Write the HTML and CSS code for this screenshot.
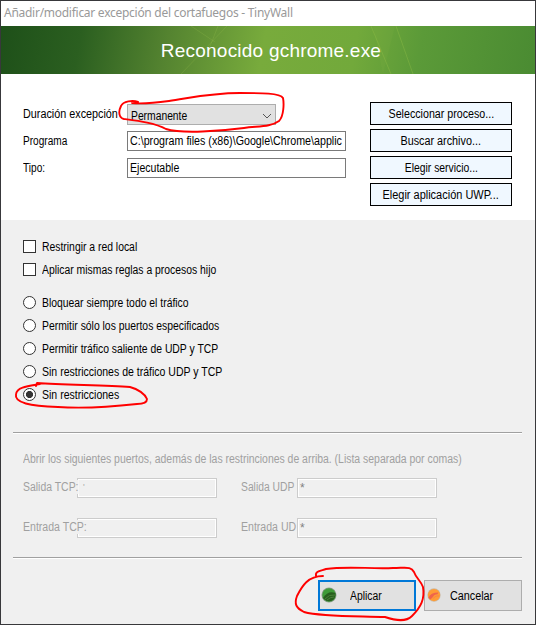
FILE: index.html
```html
<!DOCTYPE html>
<html lang="es">
<head>
<meta charset="utf-8">
<title>Añadir/modificar excepción del cortafuegos - TinyWall</title>
<link rel="stylesheet" href="styles.css">
</head>
<body>
<main class="window">
  <header class="titlebar"><span>Añadir/modificar excepción del cortafuegos - TinyWall</span></header>
  <div class="banner">
    <svg class="rays" viewBox="0 0 534 48" preserveAspectRatio="none">
      <path d="M180 48 226 0M217 0 208 23M190 0 214 16" stroke="#a5c757" stroke-opacity=".2" fill="none"/>
      <path d="M372 0H394L382 48Z" fill="#8fb84a" fill-opacity=".12"/>
      <path d="M370 0 390 48M395 0 412 48" stroke="#99c24b" stroke-opacity=".35" fill="none"/>
    </svg>
    <h1>Reconocido gchrome.exe</h1>
  </div>
  <section class="target">
    <div class="fields">
      <div class="field"><label><span class="t-dur">Duración excepción</span></label><div class="select"><span class="t-perm">Permanente</span><svg width="10" height="6" viewBox="0 0 10 6"><path d="M1 1 5 5 9 1" fill="none" stroke="#555"/></svg></div></div>
      <div class="field"><label><span class="t-prog">Programa</span></label><div class="input"><span class="t-path">C:\program files (x86)\Google\Chrome\applic</span></div></div>
      <div class="field"><label><span class="t-tipo">Tipo:</span></label><div class="input"><span class="t-ejec">Ejecutable</span></div></div>
    </div>
    <div class="pickers">
      <button><span class="t-selp">Seleccionar proceso...</span></button>
      <button><span class="t-busc">Buscar archivo...</span></button>
      <button><span class="t-serv">Elegir servicio...</span></button>
      <button><span class="t-uwp">Elegir aplicación UWP...</span></button>
    </div>
  </section>
  <section class="rules">
    <div class="option"><i class="check"></i><span class="t-red">Restringir a red local</span></div>
    <div class="option"><i class="check"></i><span class="t-hijo">Aplicar mismas reglas a procesos hijo</span></div>
    <div class="radios">
      <div class="option"><i class="radio"></i><span class="t-bloq">Bloquear siempre todo el tráfico</span></div>
      <div class="option"><i class="radio"></i><span class="t-puer">Permitir sólo los puertos especificados</span></div>
      <div class="option"><i class="radio"></i><span class="t-sal">Permitir tráfico saliente de UDP y TCP</span></div>
      <div class="option"><i class="radio"></i><span class="t-traf">Sin restricciones de tráfico UDP y TCP</span></div>
      <div class="option"><i class="radio on"></i><span class="t-sin">Sin restricciones</span></div>
    </div>
  </section>
  <section class="ports">
    <p><span class="t-abrir">Abrir los siguientes puertos, además de las restrinciones de arriba. (Lista separada por comas)</span></p>
    <div class="grid">
      <div class="port out"><label><span class="t-stcp">Salida TCP:</span></label><div class="box tick">'</div></div>
      <div class="port in"><label><span class="t-sudp">Salida UDP</span></label><div class="box">*</div></div>
      <div class="port out"><label><span class="t-etcp">Entrada TCP:</span></label><div class="box"></div></div>
      <div class="port in"><label><span class="t-eudp">Entrada UD</span></label><div class="box">*</div></div>
    </div>
  </section>
  <footer class="actions">
    <button class="primary"><svg width="16" height="16" viewBox="0 0 16 16"><circle cx="8" cy="8" r="7.5" fill="#8d9c8c"/><circle cx="8" cy="8" r="6.7" fill="#3f9b38"/><path d="M2 11Q7 3 14.5 6 15 10 12 13 7 16 3 12Z" fill="#285f1e"/><path d="M4 12Q8 7 14 8M6 13Q9 10 13 10" stroke="#488138" fill="none"/></svg><span class="t-apl">Aplicar</span></button>
    <button><svg width="14" height="14" viewBox="0 0 16 16"><circle cx="8" cy="8" r="7.6" fill="#c9b9a5"/><circle cx="8" cy="8" r="7" fill="#ff9c35"/><path d="M1.5 11Q4 5 13 5L12 7Q8 7 7 10L4 13Z" fill="#ef654b"/><path d="M7 12Q10 8 14 9" stroke="#f58249" fill="none"/></svg><span class="t-canc">Cancelar</span></button>
  </footer>
</main>
<svg class="marks" viewBox="0 0 536 625">
  <path d="M138 102C133 100 123 101 121 106C118 112 119 118 124 119C139 121 155 123 166 129C182 134 221 131 244 128C258 126 271 127 279 121C284 116 284 103 283 98C280 93 262 93 240 93C210 93 190 98 169 101C154 103 142 104 132 103"/>
  <path d="M40 384C29 386 17 387 16 394C14 403 30 406 58 407C88 409 119 406 137 404C145 404 147 402 147 399C145 394 138 389 130 387C105 385 65 385 37 383L36 386"/>
  <path d="M323 576C308 576 302 586 297 596C294 604 296 608 304 612C322 617 357 616 385 617C397 621 406 622 412 616C421 607 425 599 423 587C421 581 416 578 414 572C411 566 406 568 393 568C370 569 346 566 326 569C320 571 315 571 316 576"/>
</svg>
</body>
</html>
```

FILE: styles.css
```css
* { box-sizing: border-box; }
body { margin: 0; width: 536px; height: 625px; overflow: hidden; font: 12px "Liberation Sans", Arial, sans-serif; color: #000; }
span { white-space: pre; display: inline-block; transform-origin: 0 50%; }
.window { width: 536px; height: 625px; border: 1px solid #38383b; background: #f0f0f0; display: flex; flex-direction: column; }
.titlebar { height: 25px; background: #fff; padding: 0 3px; font: 12px/24px "Noto Sans", sans-serif; letter-spacing: -.27px; color: #999; }
.banner { position: relative; height: 48px; flex: none; display: flex; justify-content: center; align-items: center; background: linear-gradient(100deg, #1e5019 0%, #2b5f20 15%, #548330 31%, #78ab3c 49%, #72a93b 66%, #5b9a38 78%, #4a8b32 100%); }
.rays { position: absolute; inset: 0; width: 100%; height: 100%; }
h1 { position: relative; margin: 0; padding-left: 6px; font: 19px/48px "Liberation Sans", Arial, sans-serif; color: #fff; white-space: nowrap; letter-spacing: .22px; top: 1px; }
.target { height: 146px; flex: none; background: #fff; display: flex; justify-content: space-between; padding: 28px 23px 0 22px; }
.fields { width: 323px; padding-top: 2px; }
.field { display: flex; height: 27px; }
.field label { width: 104px; line-height: 21px; white-space: nowrap; }
.select { width: 149px; height: 21px; border: 1px solid #adadad; background: #e1e1e1; display: flex; justify-content: space-between; align-items: center; padding: 2px 3px 0 3px; }
.input { width: 219px; height: 20px; border: 1px solid #7a7a7a; line-height: 18px; padding-left: 2px; overflow: hidden; }
.pickers { width: 142px; display: flex; flex-direction: column; gap: 4px; }
button { margin: 0; padding: 0; font: inherit; color: #000; height: 23px; background: #f0f8ff; border: 1px solid #000; border-radius: 0; }
.pickers span { transform-origin: 50% 50%; }
.rules { padding: 15px 22px 0; height: 213px; }
.option { height: 23px; display: flex; align-items: center; gap: 6px; }
.radios { margin-top: 10px; }
.check, .radio { width: 13px; height: 13px; border: 1px solid #333; background: #fff; }
.radio { border-radius: 50%; }
.radio.on { background: radial-gradient(circle, #333 0 3.2px, #fff 3.9px); }
.ports { margin: -1px 13px 0 12px; height: 126px; border-top: 1px solid #a0a0a0; border-bottom: 1px solid #a0a0a0; box-shadow: 0 1px #fff, inset 0 1px #fff; padding: 18px 0 0 10px; color: #a0a0a0; }
.ports p { margin: 0; line-height: 17px; }
.grid { display: grid; grid-template-columns: 218px 200px; row-gap: 20px; margin-top: 10px; }
.port { display: flex; height: 20px; line-height: 19px; }
.port label { position: relative; z-index: 1; width: 54px; white-space: nowrap; }
.port.in label { width: 56px; z-index: auto; }
.port label span { background: #f0f0f0; line-height: 14px; }
.box { position: relative; width: 140px; height: 20px; flex: none; border: 1px solid #ccc; background: #f0f0f0; box-shadow: inset 0 0 0 1px #fff; padding-left: 2px; line-height: 19px; color: #808080; }
.tick { padding-left: 5px; color: #aaa; font-size: 9px; line-height: 16px; }
.actions { display: flex; justify-content: flex-end; gap: 8px; padding: 22px 13px 0 0; }
.actions button { width: 98px; height: 31px; display: flex; align-items: center; background: #e1e1e1; border-color: #adadad; padding-left: 2px; }
.actions .primary { border: 2px solid #0078d7; padding-left: 1px; }
.actions svg { flex: none; margin-top: -2px; }
.actions span { margin-left: 9px; }
.actions .primary span { margin-left: 13px; }
.marks { position: absolute; inset: 0; width: 536px; height: 625px; fill: none; stroke: #f00; stroke-width: 1.9; stroke-linecap: round; stroke-linejoin: round; pointer-events: none; }
.t-dur { transform: scaleX(.9); }
.t-prog { transform: scaleX(.84); }
.t-tipo { transform: scaleX(.84); }
.t-perm { transform: scaleX(.86); }
.t-path { transform: scaleX(.89); }
.t-ejec { transform: scaleX(.88); }
.t-selp { transform: scaleX(.89); }
.t-busc { transform: scaleX(.9); }
.t-serv { transform: scaleX(.865); }
.t-uwp { transform: scaleX(.915); }
.t-red, .t-hijo, .t-bloq, .t-puer, .t-sal { transform: scaleX(.865); }
.t-traf, .t-sin { transform: scaleX(.877); }
.t-abrir { transform: scaleX(.87); }
.t-stcp { transform: scaleX(.87); }
.t-sudp { transform: scaleX(.86); }
.t-etcp, .t-eudp { transform: scaleX(.88); }
.t-apl { transform: scaleX(.865); }
.t-canc { transform: scaleX(.9); }
```
